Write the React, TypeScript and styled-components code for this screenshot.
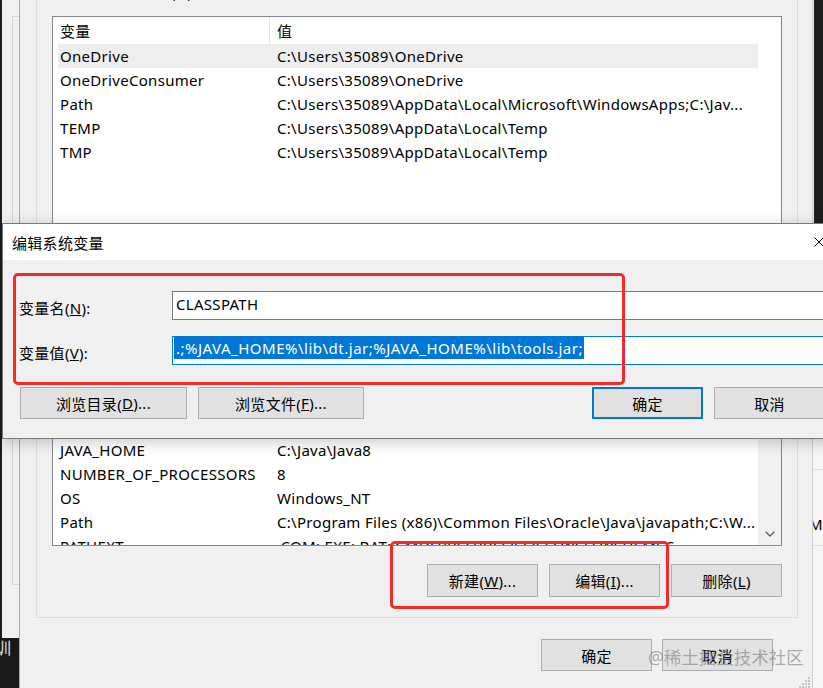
import styled, { createGlobalStyle } from "styled-components";

const GlobalStyle = createGlobalStyle`
  html, body {
    margin: 0;
    padding: 0;
  }
  body {
    background: #1c1c1c;
    font-family: "Noto Sans", "Noto Sans CJK SC", sans-serif;
    font-size: 15px;
    letter-spacing: 0.3px;
    color: #000;
  }
`;

const Desktop = styled.div`
  position: relative;
  width: 823px;
  height: 688px;
  overflow: hidden;
  background: #1c1c1c;
`;

/* scraps of the windows lying behind */
const BackPane = styled.div`
  position: absolute;
  left: 2px;
  top: 0;
  width: 17px;
  height: 638px;
  box-sizing: border-box;
  padding: 16px 0 0 10px;
  background: #f0f0f0;
`;

const BackFrame = styled.div`
  height: 569px;
  box-sizing: border-box;
  border: 1px solid #d4d4d4;
  border-right: none;
`;

const CornerScrap = styled.div`
  position: absolute;
  left: 0;
  top: 638px;
  width: 19px;
  height: 50px;
  overflow: hidden;
  background: #191919;
  color: #e6e6e6;
  font-size: 16px;
  line-height: 20px;
  text-indent: -5px;
`;

const SidePane = styled.div`
  position: absolute;
  left: 813px;
  top: 0;
  width: 10px;
  height: 688px;
  display: flex;
  flex-direction: column;
`;

const SideDark = styled.div`
  height: 223px;
  box-sizing: border-box;
  border-left: 1px solid #e9e9e9;
  background: #1e1e1e;
`;

const SideLight = styled.div`
  flex: 1;
  padding-top: 246px;
  background: #f6f6f6;
  overflow: hidden;
`;

const SideRow = styled.div`
  height: 77px;
  box-sizing: border-box;
  border-top: 1px solid #e0e0e0;
  border-bottom: 1px solid #e0e0e0;
  display: flex;
  align-items: flex-end;
  padding-bottom: 11px;
  line-height: 20px;
  text-indent: -4px;
  white-space: nowrap;
`;

/* environment variables window */
const EnvWindow = styled.div`
  position: absolute;
  left: 19px;
  top: -30px;
  width: 794px;
  height: 730px;
  box-sizing: border-box;
  padding: 0 14px 0 16px;
  background: #f0f0f0;
  border-left: 1px solid #a8a8a8;
  border-right: 1px solid #cdcdcd;
  display: flex;
  flex-direction: column;
`;

const GroupBox = styled.section<{ $top: number }>`
  margin-top: ${(p) => p.$top}px;
  border: 1px solid #dcdcdc;
  padding: 0 15px 20px;
  display: flex;
  flex-direction: column;
`;

const GroupTitle = styled.div`
  align-self: flex-start;
  margin: -14px 0 4px -8px;
  padding: 0 2px;
  height: 20px;
  line-height: 20px;
  background: #f0f0f0;
`;

const ListBox = styled.div<{ $height: number }>`
  margin-top: 10px;
  height: ${(p) => p.$height}px;
  box-sizing: border-box;
  border: 1px solid #828790;
  background: #fff;
  display: flex;
  overflow: hidden;
`;

const ListScroll = styled.div`
  flex: 1;
  padding-left: 5px;
  overflow: hidden;
`;

const ScrollTrack = styled.div<{ $visible: boolean }>`
  width: 23px;
  background: ${(p) => (p.$visible ? "#f0f0f0" : "#fff")};
  display: flex;
  flex-direction: column;
  justify-content: flex-end;
`;

const ScrollArrow = styled.div`
  height: 23px;
  display: flex;
  align-items: center;
  justify-content: center;
`;

const ListHeader = styled.div`
  display: grid;
  grid-template-columns: 212px 488px;
  height: 27px;
  line-height: 29px;
`;

const HeaderCell = styled.div<{ $first?: boolean }>`
  padding-left: ${(p) => (p.$first ? 2 : 7)}px;
  border-right: ${(p) => (p.$first ? "1px solid #e5e5e5" : "none")};
`;

const Row = styled.div<{ $selected?: boolean }>`
  display: grid;
  grid-template-columns: 212px 488px;
  height: 24px;
  line-height: 24px;
  background: ${(p) => (p.$selected ? "#eeeeee" : "transparent")};
`;

const Cell = styled.div<{ $first?: boolean }>`
  padding-left: ${(p) => (p.$first ? 2 : 7)}px;
  white-space: nowrap;
  overflow: hidden;
`;

const ButtonRow = styled.div<{ $top: number; $gap: number; $right?: number }>`
  margin-top: ${(p) => p.$top}px;
  padding-right: ${(p) => p.$right ?? 0}px;
  display: flex;
  justify-content: flex-end;
  gap: ${(p) => p.$gap}px;
`;

const Button = styled.button<{ $width: number; $height: number; $primary?: boolean }>`
  width: ${(p) => p.$width}px;
  height: ${(p) => p.$height}px;
  box-sizing: border-box;
  margin: 0;
  padding: 0;
  background: #e1e1e1;
  border: ${(p) => (p.$primary ? "2px solid #0078d7" : "1px solid #adadad")};
  font-family: inherit;
  font-size: 15px;
  letter-spacing: inherit;
  color: #000;
  display: flex;
  align-items: center;
  justify-content: center;
  white-space: nowrap;
`;

/* edit dialog */
const EditDialog = styled.div`
  position: absolute;
  left: 2px;
  top: 223px;
  width: 842px;
  height: 216px;
  box-sizing: border-box;
  border: 1px solid #787878;
  background: #f0f0f0;
  box-shadow: 0 3px 14px rgba(0, 0, 0, 0.22);
  display: flex;
  flex-direction: column;
`;

const TitleBar = styled.div`
  height: 36px;
  flex-shrink: 0;
  padding: 0 19px 0 9px;
  background: #fff;
  display: flex;
  align-items: center;
  justify-content: space-between;
`;

const DialogBody = styled.div`
  padding: 31px 18px 0 16px;
  display: flex;
  flex-direction: column;
`;

const FieldRow = styled.div`
  display: flex;
  align-items: center;
  height: 29px;
  & + & {
    margin-top: 16px;
  }
`;

const FieldLabel = styled.div`
  width: 153px;
  flex-shrink: 0;
  padding-top: 3px;
`;

const FieldBox = styled.div<{ $focused?: boolean }>`
  flex: 1;
  height: 29px;
  box-sizing: border-box;
  border: 1px solid ${(p) => (p.$focused ? "#0078d7" : "#7a7a7a")};
  background: #fff;
  padding: ${(p) => (p.$focused ? "0 0 0 1px" : "1px 0 0 3px")};
  line-height: 22px;
  white-space: nowrap;
  overflow: hidden;
`;

const Selection = styled.span`
  display: inline-block;
  padding: 0 1px 0 2px;
  background: #0078d7;
  color: #fff;
  letter-spacing: 0.5px;
`;

const DialogButtons = styled.div`
  margin-top: 22px;
  padding-left: 1px;
  display: flex;
  justify-content: space-between;
`;

const ButtonGroup = styled.div`
  display: flex;
  gap: 11px;
`;

/* overlays */
const Annotation = styled.div<{ $x: number; $y: number; $w: number; $h: number }>`
  position: absolute;
  left: ${(p) => p.$x}px;
  top: ${(p) => p.$y}px;
  width: ${(p) => p.$w}px;
  height: ${(p) => p.$h}px;
  box-sizing: border-box;
  border: 3px solid #f52a2a;
  border-radius: 5px;
  pointer-events: none;
`;

const Watermark = styled.div`
  position: absolute;
  left: 648px;
  top: 645px;
  font-size: 17.5px;
  line-height: 24px;
  letter-spacing: 0;
  color: rgba(125, 125, 125, 0.62);
  white-space: nowrap;
  pointer-events: none;
`;

const Grip = styled.svg`
  position: absolute;
  left: 799px;
  top: 677px;
`;

type Variable = { name: string; value: string };

const userVars: Variable[] = [
  { name: "OneDrive", value: "C:\\Users\\35089\\OneDrive" },
  { name: "OneDriveConsumer", value: "C:\\Users\\35089\\OneDrive" },
  {
    name: "Path",
    value: "C:\\Users\\35089\\AppData\\Local\\Microsoft\\WindowsApps;C:\\Jav...",
  },
  { name: "TEMP", value: "C:\\Users\\35089\\AppData\\Local\\Temp" },
  { name: "TMP", value: "C:\\Users\\35089\\AppData\\Local\\Temp" },
];

const systemVars: Variable[] = [
  { name: "CLASSPATH", value: ".;%JAVA_HOME%\\lib\\dt.jar;%JAVA_HOME%\\lib\\tools.jar;" },
  { name: "ComSpec", value: "C:\\Windows\\system32\\cmd.exe" },
  { name: "DriverData", value: "C:\\Windows\\System32\\Drivers\\DriverData" },
  { name: "JAVA_HOME", value: "C:\\Java\\Java8" },
  { name: "NUMBER_OF_PROCESSORS", value: "8" },
  { name: "OS", value: "Windows_NT" },
  {
    name: "Path",
    value: "C:\\Program Files (x86)\\Common Files\\Oracle\\Java\\javapath;C:\\W...",
  },
  { name: "PATHEXT", value: ".COM;.EXE;.BAT;.CMD;.VBS;.VBE;.JS;.JSE;.WSF;.WSH;.MSC" },
];

function VariableList({
  rows,
  height,
  selected,
  scroll,
}: {
  rows: Variable[];
  height: number;
  selected?: number;
  scroll?: boolean;
}) {
  return (
    <ListBox $height={height}>
      <ListScroll>
        <ListHeader>
          <HeaderCell $first>变量</HeaderCell>
          <HeaderCell>值</HeaderCell>
        </ListHeader>
        {rows.map((r, i) => (
          <Row key={r.name + i} $selected={i === selected}>
            <Cell $first>{r.name}</Cell>
            <Cell>{r.value}</Cell>
          </Row>
        ))}
      </ListScroll>
      <ScrollTrack $visible={!!scroll}>
        {scroll && (
          <ScrollArrow>
            <svg width="10" height="6" viewBox="0 0 10 6">
              <path d="M0.7 0.7 L5 5 L9.3 0.7" fill="none" stroke="#606060" strokeWidth="1.3" />
            </svg>
          </ScrollArrow>
        )}
      </ScrollTrack>
    </ListBox>
  );
}

function App() {
  return (
    <Desktop>
      <GlobalStyle />
      <BackPane>
        <BackFrame />
      </BackPane>
      <CornerScrap>训</CornerScrap>
      <SidePane>
        <SideDark />
        <SideLight>
          <SideRow>ME</SideRow>
        </SideLight>
      </SidePane>

      <EnvWindow>
        <GroupBox $top={25}>
          <GroupTitle>
            35089 的用户变量(<u>U</u>)
          </GroupTitle>
          <VariableList rows={userVars} height={216} selected={0} />
          <ButtonRow $top={19} $gap={11}>
            <Button $width={111} $height={33}>
              新建(<u>N</u>)...
            </Button>
            <Button $width={111} $height={33}>
              编辑(<u>E</u>)...
            </Button>
            <Button $width={111} $height={33}>
              删除(<u>D</u>)
            </Button>
          </ButtonRow>
        </GroupBox>

        <GroupBox $top={12}>
          <GroupTitle>
            系统变量(<u>S</u>)
          </GroupTitle>
          <VariableList rows={systemVars} height={208} scroll />
          <ButtonRow $top={18} $gap={11}>
            <Button $width={111} $height={33}>
              新建(<u>W</u>)...
            </Button>
            <Button $width={111} $height={33}>
              编辑(<u>I</u>)...
            </Button>
            <Button $width={111} $height={33}>
              删除(<u>L</u>)
            </Button>
          </ButtonRow>
        </GroupBox>

        <ButtonRow $top={21} $gap={10} $right={25}>
          <Button $width={111} $height={32}>
            确定
          </Button>
          <Button $width={111} $height={32}>
            取消
          </Button>
        </ButtonRow>
      </EnvWindow>
      <Grip width="12" height="11" viewBox="0 0 12 11">
        <g fill="#c4c4c4">
          <rect x="9" y="0" width="2" height="2" />
          <rect x="6" y="3" width="2" height="2" />
          <rect x="9" y="3" width="2" height="2" />
          <rect x="3" y="6" width="2" height="2" />
          <rect x="6" y="6" width="2" height="2" />
          <rect x="9" y="6" width="2" height="2" />
          <rect x="0" y="9" width="2" height="2" />
          <rect x="3" y="9" width="2" height="2" />
          <rect x="6" y="9" width="2" height="2" />
          <rect x="9" y="9" width="2" height="2" />
        </g>
      </Grip>

      <EditDialog>
        <TitleBar>
          <span>编辑系统变量</span>
          <svg width="10" height="10" viewBox="0 0 10 10">
            <path d="M0.5 0.5 L9.5 9.5 M9.5 0.5 L0.5 9.5" stroke="#000" strokeWidth="1" />
          </svg>
        </TitleBar>
        <DialogBody>
          <FieldRow>
            <FieldLabel>
              变量名(<u>N</u>):
            </FieldLabel>
            <FieldBox>CLASSPATH</FieldBox>
          </FieldRow>
          <FieldRow>
            <FieldLabel>
              变量值(<u>V</u>):
            </FieldLabel>
            <FieldBox $focused>
              <Selection>.;%JAVA_HOME%\lib\dt.jar;%JAVA_HOME%\lib\tools.jar;</Selection>
            </FieldBox>
          </FieldRow>
          <DialogButtons>
            <ButtonGroup>
              <Button $width={167} $height={32}>
                浏览目录(<u>D</u>)...
              </Button>
              <Button $width={166} $height={32}>
                浏览文件(<u>F</u>)...
              </Button>
            </ButtonGroup>
            <ButtonGroup>
              <Button $width={111} $height={32} $primary>
                确定
              </Button>
              <Button $width={111} $height={32}>
                取消
              </Button>
            </ButtonGroup>
          </DialogButtons>
        </DialogBody>
      </EditDialog>

      <Annotation $x={13} $y={273} $w={612} $h={112} />
      <Annotation $x={390} $y={541} $w={279} $h={68} />
      <Watermark>@稀土掘金技术社区</Watermark>
    </Desktop>
  );
}

export default App;
